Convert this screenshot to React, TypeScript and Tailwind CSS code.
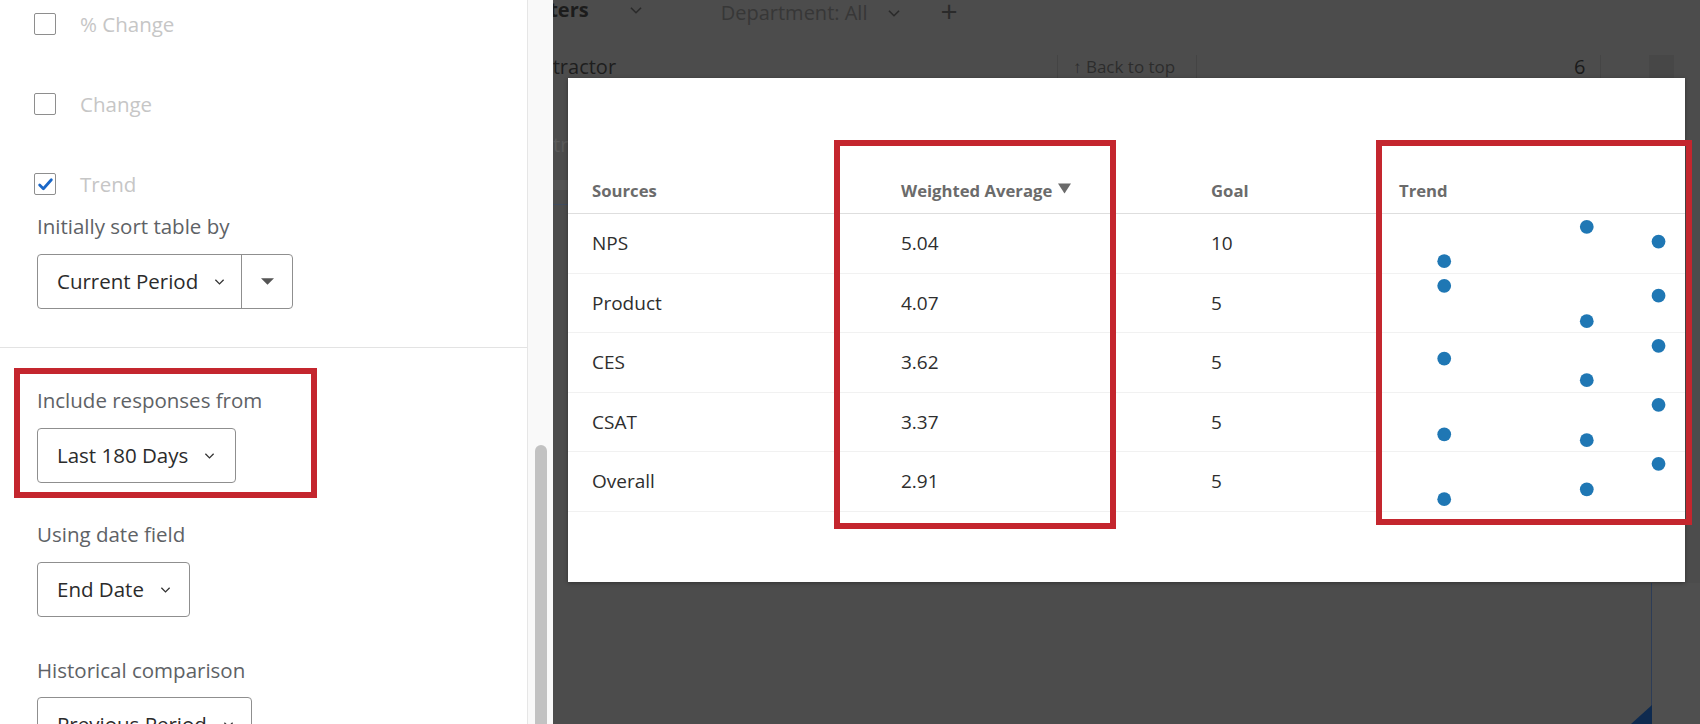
import React from 'react';

const font = { fontFamily: '"Open Sans", "Noto Sans", Arial, sans-serif' };

const rows = [
  { name: 'NPS', avg: '5.04', goal: '10', dots: [48, 13, 28] },
  { name: 'Product', avg: '4.07', goal: '5', dots: [12, 48, 22] },
  { name: 'CES', avg: '3.62', goal: '5', dots: [26, 48, 13] },
  { name: 'CSAT', avg: '3.37', goal: '5', dots: [42, 48, 12] },
  { name: 'Overall', avg: '2.91', goal: '5', dots: [48, 38, 12] },
];

const Chevron = ({ className = '' }: { className?: string }) => (
  <svg viewBox="0 0 12 8" className={className} fill="none" stroke="currentColor" strokeWidth="1.4">
    <polyline points="1.5,1.5 6,6 10.5,1.5" />
  </svg>
);

const Checkbox = ({ label, checked }: { label: string; checked?: boolean }) => (
  <div className="flex items-center h-[48px]">
    <div className="w-[22px] h-[22px] border-[1.5px] border-[#8e8e8e] rounded-[2px] flex items-center justify-center bg-white">
      {checked && (
        <svg viewBox="0 0 16 16" className="w-[17px] h-[17px]" fill="none" stroke="#1a67c7" strokeWidth="2.6" strokeLinecap="round" strokeLinejoin="round">
          <polyline points="2.5,8.5 6,12 13.5,3.5" />
        </svg>
      )}
    </div>
    <span className="ml-[24px] text-[20.5px] text-[#c6c6c6]">{label}</span>
  </div>
);

const Select = ({ value, width }: { value: string; width: string }) => (
  <div className={`${width} h-[55px] border border-[#8f8f8f] rounded-[4px] flex items-center pl-[19px] bg-white`}>
    <span className="text-[20.5px] text-[#2b2b2b]">{value}</span>
    <Chevron className="w-[11px] h-[8px] ml-[16px] text-[#333]" />
  </div>
);

const Label = ({ children }: { children: React.ReactNode }) => (
  <div className="h-[30px] flex items-center text-[20.5px] text-[#5e6266]">{children}</div>
);

export default function App() {
  return (
    <div className="w-[1700px] h-[724px] flex overflow-hidden bg-white" style={font}>
      {/* settings panel */}
      <div className="relative w-[528px] h-full border-r border-[#e6e6e6] bg-white flex flex-col shrink-0">
        <div className="px-[34px] flex flex-col">
          <Checkbox label="% Change" />
          <div className="mt-[32px]"><Checkbox label="Change" /></div>
          <div className="mt-[32px]"><Checkbox label="Trend" checked /></div>
          <div className="mt-[3px] pl-[3px]"><Label>Initially sort table by</Label></div>
          <div className="mt-[13px] ml-[3px] w-[256px] h-[55px] border border-[#8f8f8f] rounded-[4px] flex bg-white">
            <div className="flex items-center pl-[19px] w-[204px] border-r border-[#8f8f8f]">
              <span className="text-[20.5px] text-[#2b2b2b]">Current Period</span>
              <Chevron className="w-[11px] h-[8px] ml-[16px] text-[#333]" />
            </div>
            <div className="flex-1 flex items-center justify-center">
              <svg viewBox="0 0 14 7" className="w-[13px] h-[7px]" fill="#555">
                <polygon points="0,0 14,0 7,7" />
              </svg>
            </div>
          </div>
        </div>
        <div className="mt-[38px] border-t border-[#e3e3e3]" />
        <div className="px-[37px] flex flex-col">
          <div className="mt-[37px]"><Label>Include responses from</Label></div>
          <div className="mt-[13px]"><Select value="Last 180 Days" width="w-[199px]" /></div>
          <div className="mt-[36px]"><Label>Using date field</Label></div>
          <div className="mt-[13px]"><Select value="End Date" width="w-[153px]" /></div>
          <div className="mt-[38px]"><Label>Historical comparison</Label></div>
          <div className="mt-[12px]"><Select value="Previous Period" width="w-[215px]" /></div>
        </div>
        <div className="absolute left-[14px] top-[368px] w-[303px] h-[130px] border-[6px] border-[#c4262e]" />
      </div>

      {/* scrollbar */}
      <div className="w-[25px] h-full bg-[#f9f9f9] flex flex-col justify-end items-center shrink-0">
        <div className="w-[12px] h-[279px] bg-[#c2c2c2] rounded-t-[6px]" />
      </div>

      {/* dimmed dashboard */}
      <div className="relative flex-1 h-full bg-[#4c4c4c] overflow-hidden">
        <div className="flex items-center h-[26px] text-[20px]">
          <span className="-ml-[27px] -mt-[7px] font-bold text-[#1c1c1c]">Filters</span>
          <Chevron className="w-[14px] h-[9px] ml-[40px] -mt-[6px] text-[#2a2a2a]" />
          <span className="ml-[78px] text-[#373737]">Department: All</span>
          <Chevron className="w-[14px] h-[9px] ml-[20px] text-[#2a2a2a]" />
          <span className="ml-[39px] -mt-[4px] text-[30px] leading-none text-[#2a2a2a]">+</span>
        </div>
        <div className="mt-[28px] flex items-center h-[26px] text-[20px]">
          <span className="-ml-[26px] text-[#1e1e1e] w-[530px]">Detractor</span>
          <div className="w-px h-[24px] bg-[#444]" />
          <span className="ml-[15px] w-[123px] text-[17px] text-[#2c2c2c]">↑ Back to top</span>
          <div className="w-px h-[24px] bg-[#444]" />
          <span className="ml-[377px] w-[26px] text-[#1a1a1a]">6</span>
          <div className="w-px h-[24px] bg-[#454545]" />
          <div className="ml-[48px] w-[25px] h-[25px] bg-[#474747]" />
        </div>
        <div className="mt-[50px] text-[20px] text-[#5a5a5a]">tr</div>
        <div className="mt-[20px] h-[10px] w-[15px] bg-[#555]" />
        <div className="mt-[14px] h-px w-[15px] bg-[#3f4b5e]" />

        <div className="absolute right-0 bottom-0 w-[49px] h-[141px] border-l border-[#2d3d57] bg-[#4f4f4f]">
          <svg viewBox="0 0 21 19" className="absolute -left-[21px] bottom-0 w-[21px] h-[19px]">
            <polygon points="21,0 21,19 0,19" fill="#0e2a4f" />
          </svg>
        </div>

        {/* modal */}
        <div className="absolute left-[15px] top-[78px] w-[1117px] h-[504px] bg-white shadow-[0_1px_4px_rgba(0,0,0,0.35)]">
          <div className="pt-[90px]">
            <div className="grid grid-cols-[333px_310px_188px_1fr] h-[46px] border-b border-[#dedede] items-center text-[16.7px] font-bold text-[#6b6b6b]">
              <div className="pl-[24px]">Sources</div>
              <div className="flex items-center gap-[6px]">
                Weighted Average
                <svg viewBox="0 0 14 11" className="w-[13px] h-[11px] mb-[4px]" fill="#6b6b6b">
                  <polygon points="0,0 14,0 7,11" />
                </svg>
              </div>
              <div>Goal</div>
              <div>Trend</div>
            </div>
            {rows.map((r) => (
              <div key={r.name} className="grid grid-cols-[333px_310px_188px_1fr] h-[59.6px] border-b border-[#f1f1f1] items-center text-[19px] text-[#2e2e2e]">
                <div className="pl-[24px]">{r.name}</div>
                <div>{r.avg}</div>
                <div>{r.goal}</div>
                <svg className="h-full w-full" viewBox="0 0 286 59.6" preserveAspectRatio="xMinYMin meet">
                  {[46, 191, 264].map((cx, i) => (
                    <circle key={cx} cx={cx} cy={r.dots[i]} r="7" fill="#1f77b4" />
                  ))}
                </svg>
              </div>
            ))}
          </div>
          <div className="absolute left-[266px] top-[62px] w-[282px] h-[389px] border-[6px] border-[#c4262e]" />
          <div className="absolute left-[808px] top-[62px] w-[316px] h-[385px] border-[6px] border-[#c4262e]" />
        </div>
      </div>
    </div>
  );
}
